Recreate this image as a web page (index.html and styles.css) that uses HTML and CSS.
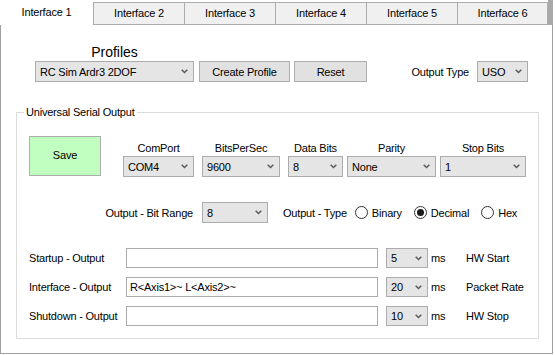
FILE: index.html
```html
<!DOCTYPE html>
<html lang="en">
<head>
  <meta charset="UTF-8">
  <title>Interface Settings</title>
  <link rel="stylesheet" href="styles.css">
</head>
<body>
<div class="tabctl">
  <div class="tabstrip">
    <div class="tab active">Interface 1</div>
    <div class="tab">Interface 2</div>
    <div class="tab">Interface 3</div>
    <div class="tab">Interface 4</div>
    <div class="tab">Interface 5</div>
    <div class="tab last">Interface 6</div>
    <div class="tabfill"></div>
  </div>

  <div class="page">
    <div class="profile-row">
      <div class="profile-col">
        <div class="profiles-label">Profiles</div>
        <div class="combo w-profile"><span>RC Sim Ardr3 2DOF</span><svg width="7" height="5"><polyline points="0.7,0.7 3.5,3.5 6.3,0.7"/></svg></div>
      </div>
      <div class="btn btn-create">Create Profile</div>
      <div class="btn btn-reset">Reset</div>
      <div class="outtype">
        <span>Output Type</span>
        <div class="combo w-uso"><span>USO</span><svg width="7" height="5"><polyline points="0.7,0.7 3.5,3.5 6.3,0.7"/></svg></div>
      </div>
    </div>

    <fieldset class="group">
      <legend>Universal Serial Output</legend>
      <div class="group-body">

        <div class="serial-row">
          <div class="btn save">Save</div>
          <div class="field gap8">
            <label>ComPort</label>
            <div class="combo w-com"><span>COM4</span><svg width="7" height="5"><polyline points="0.7,0.7 3.5,3.5 6.3,0.7"/></svg></div>
          </div>
          <div class="field gap8">
            <label>BitsPerSec</label>
            <div class="combo w-bps"><span>9600</span><svg width="7" height="5"><polyline points="0.7,0.7 3.5,3.5 6.3,0.7"/></svg></div>
          </div>
          <div class="field gap4">
            <label>Data Bits</label>
            <div class="combo w-data"><span>8</span><svg width="7" height="5"><polyline points="0.7,0.7 3.5,3.5 6.3,0.7"/></svg></div>
          </div>
          <div class="field gap4">
            <label>Parity</label>
            <div class="combo w-parity"><span>None</span><svg width="7" height="5"><polyline points="0.7,0.7 3.5,3.5 6.3,0.7"/></svg></div>
          </div>
          <div class="field">
            <label>Stop Bits</label>
            <div class="combo w-stop"><span>1</span><svg width="7" height="5"><polyline points="0.7,0.7 3.5,3.5 6.3,0.7"/></svg></div>
          </div>
        </div>

        <div class="format-row">
          <span class="bitrange-label">Output - Bit Range</span>
          <div class="combo w-range"><span>8</span><svg width="7" height="5"><polyline points="0.7,0.7 3.5,3.5 6.3,0.7"/></svg></div>
          <span class="type-label">Output - Type</span>
          <span class="radio"></span><span class="radio-text">Binary</span>
          <span class="radio checked"></span><span class="radio-text">Decimal</span>
          <span class="radio"></span><span class="radio-text">Hex</span>
        </div>

        <div class="io-row first">
          <span class="io-label">Startup - Output</span>
          <div class="textbox"></div>
          <div class="combo w-ms"><span>5</span><svg width="7" height="5"><polyline points="0.7,0.7 3.5,3.5 6.3,0.7"/></svg></div>
          <span class="ms">ms</span>
          <span>HW Start</span>
        </div>
        <div class="io-row">
          <span class="io-label">Interface - Output</span>
          <div class="textbox">R&lt;Axis1&gt;~ L&lt;Axis2&gt;~</div>
          <div class="combo w-ms"><span>20</span><svg width="7" height="5"><polyline points="0.7,0.7 3.5,3.5 6.3,0.7"/></svg></div>
          <span class="ms">ms</span>
          <span>Packet Rate</span>
        </div>
        <div class="io-row">
          <span class="io-label">Shutdown - Output</span>
          <div class="textbox"></div>
          <div class="combo w-ms"><span>10</span><svg width="7" height="5"><polyline points="0.7,0.7 3.5,3.5 6.3,0.7"/></svg></div>
          <span class="ms">ms</span>
          <span>HW Stop</span>
        </div>

      </div>
    </fieldset>
  </div>
</div>
</body>
</html>
```

FILE: styles.css
```css
* {
  box-sizing: border-box;
}

body {
  background: white;
  font-family: 'Liberation Sans', Arial, sans-serif;
  font-size: 11px;
  letter-spacing: -0.2px;
  color: #000;
  margin: 0;
  padding: 0;
}

.tabctl {
  width: 553px;
  height: 354px;
}

/* tab headers */
.tabstrip {
  display: flex;
  height: 25px;
}

.tab {
  width: 91px;
  height: 23px;
  margin-top: 2px;
  background: #f0f0f0;
  border: 1px solid #acacac;
  border-right: none;
  display: flex;
  align-items: center;
  justify-content: center;
  padding-bottom: 1px;
}

.tab.last {
  border-right: 1px solid #acacac;
}

.tab.active {
  width: 93px;
  height: 25px;
  margin-top: 0;
  background: white;
  border: none;
  padding-bottom: 1px;
}

.tabfill {
  flex: 1;
  background: #a9a9a9;
  border-bottom: 1px solid #acacac;
}

/* tab page */
.page {
  height: 329px;
  border: 1px solid #a0a0a0;
  border-top: none;
}

.profile-row {
  display: flex;
  align-items: flex-end;
  padding: 19px 24px 0 34px;
}

.profile-col {
  display: flex;
  flex-direction: column;
  align-items: center;
}

.profiles-label {
  font-size: 14px;
  line-height: 16px;
  letter-spacing: 0;
  margin-bottom: 1px;
}

.outtype {
  margin-left: auto;
  display: flex;
  align-items: center;
  gap: 8px;
}

/* controls */
.btn {
  height: 21px;
  background: #e1e1e1;
  border: 1px solid #adadad;
  display: flex;
  align-items: center;
  justify-content: center;
}

.btn-create {
  width: 91px;
  margin-left: 5px;
}

.btn-reset {
  width: 73px;
  margin-left: 4px;
}

.combo {
  height: 21px;
  background: #e5e5e5;
  border: 1px solid #acacac;
  display: flex;
  align-items: center;
  justify-content: space-between;
  padding: 0 5px 0 4px;
}

.combo svg {
  fill: none;
  stroke: #5a5a5a;
  stroke-width: 1.5;
  flex-shrink: 0;
}

.w-profile { width: 159px; }
.w-uso { width: 51px; }
.w-com { width: 71px; }
.w-bps { width: 78px; }
.w-data { width: 55px; }
.w-parity { width: 89px; }
.w-stop { width: 86px; }
.w-range { width: 66px; }
.w-ms { width: 42px; height: 20px; margin-left: 8px; }

.textbox {
  width: 252px;
  height: 20px;
  background: white;
  border: 1px solid #ababab;
  padding: 0 3px;
  display: flex;
  align-items: center;
}

/* group box */
.group {
  margin: 24px 13px 0 15px;
  padding: 0;
  border: 1px solid #dcdcdc;
  min-width: 0;
}

.group legend {
  margin-left: 7px;
  padding: 0 2px;
  line-height: 13px;
}

.group-body {
  padding: 17px 0 12px 12px;
}

.serial-row {
  display: flex;
  align-items: flex-end;
}

.save {
  width: 72px;
  height: 40px;
  background: #c0ffc0;
  margin-right: 22px;
  margin-bottom: 1px;
  padding-bottom: 2px;
}

.field {
  display: flex;
  flex-direction: column;
  align-items: center;
}

.field label {
  line-height: 13px;
  margin-bottom: 1px;
}

.gap8 { margin-right: 8px; }
.gap4 { margin-right: 4px; }

.format-row {
  display: flex;
  align-items: center;
  margin-top: 25px;
}

.bitrange-label {
  width: 164px;
  text-align: right;
  margin-right: 9px;
}

.type-label {
  margin-left: 15px;
  margin-right: 8px;
}

.radio {
  width: 13px;
  height: 13px;
  border: 1px solid #333;
  border-radius: 50%;
  background: white;
  margin-right: 4px;
  display: flex;
  align-items: center;
  justify-content: center;
}

.radio.checked::after {
  content: "";
  width: 7px;
  height: 7px;
  border-radius: 50%;
  background: #1a1a1a;
}

.radio-text {
  margin-right: 12px;
}

.io-row {
  display: flex;
  align-items: center;
  margin-top: 9px;
}

.io-row.first {
  margin-top: 25px;
}

.io-label {
  width: 97px;
}

.ms {
  width: 35px;
  margin-left: 3px;
}
```
